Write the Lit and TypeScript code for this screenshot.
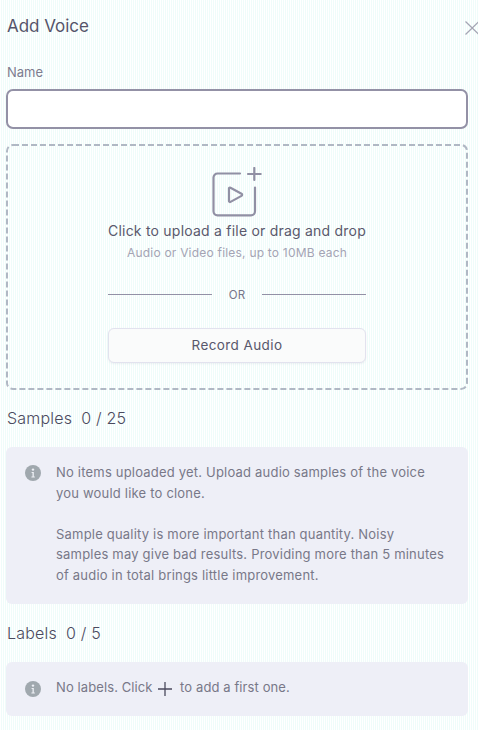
import { LitElement, html, css, svg } from "lit";
import { customElement } from "lit/decorators.js";

const info = svg`<svg class="info" viewBox="0 0 16 16" width="16" height="16"><circle cx="8" cy="8" r="8" fill="#a0a8ae"/><circle cx="8" cy="4.6" r="1.2" fill="#eef0f6"/><path d="M6.6 7h2.2v4.4h1v1H6.4v-1h1.1V8H6.6z" fill="#eef0f6"/></svg>`;

@customElement("app-root")
export class AppRoot extends LitElement {
  static styles = css`
    :host {
      display: block;
      width: 478px;
      height: 730px;
      overflow: hidden;
      box-sizing: border-box;
      padding: 0 10px 0 6px;
      font-family: Inter, "Liberation Sans", sans-serif;
      background: repeating-linear-gradient(90deg, #ffffff 0 1px, #effcfa 1px 2px);
      color: #4b4a5e;
    }
    .head { display: flex; justify-content: space-between; align-items: center; height: 52px; margin-right: -13px; }
    .title { font-size: 17px; line-height: 24px; padding-left: 1px; letter-spacing: -.03px; color: #55546a; }
    .close { display: block; margin-top: 3px; }
    .name { font-size: 13px; line-height: 18px; color: #7d7c8f; margin-top: 11px; padding-left: 1px; }
    .input { box-sizing: border-box; height: 40px; margin-top: 8px; background: #fff; border: 2px solid #9391a6; border-radius: 7px; }
    .drop { box-sizing: border-box; height: 246px; margin-top: 15px; border-radius: 6px; display: flex; flex-direction: column; align-items: center; position: relative; }
    .dash { position: absolute; inset: 0; width: 100%; height: 100%; }
    .dash rect { width: calc(100% - 2px); height: calc(100% - 2px); }
    .icon { display: block; margin-top: 23px; }
    .drop-title { font-size: 14px; line-height: 20px; margin-top: 4px; color: #5a596c; letter-spacing: .22px; }
    .drop-sub { font-size: 12px; line-height: 18px; color: #a4a4b4; margin-top: 3px; letter-spacing: .21px; }
    .or { width: 258px; display: flex; align-items: center; gap: 16.5px; font-size: 11.5px; color: #77768a; margin-top: 24.5px; line-height: 16px; letter-spacing: .2px; }
    .or i { flex: 1; height: 1px; background: #9391a6; }
    .btn { box-sizing: border-box; width: 258px; height: 35px; margin-top: 25.5px; padding-bottom: 2px; border: 1px solid #e2e2ee; border-radius: 6px; background: #fafbfb; box-shadow: 0 1px 2px rgba(80,80,120,.08); font-size: 13.5px; font-weight: 400; color: #58576b; display: flex; align-items: center; justify-content: center; letter-spacing: .4px; }
    .section { font-size: 16px; font-weight: 300; line-height: 22px; color: #4b4a5e; display: flex; gap: 9px; padding-left: 1px; letter-spacing: .2px; }
    .s1 { margin-top: 17px; }
    .s2 { margin-top: 18px; }
    .box { display: flex; gap: 15px; background: #eeeff7; border-radius: 6px; font-size: 13px; line-height: 20.6px; color: #787888; padding: 15px 20px 18px 19px; margin-top: 18px; letter-spacing: .2px; }
    .box p { margin: 0; }
    .box p + p { margin-top: 20.6px; }
    .info { flex: none; margin-top: 3px; }
    .box.l { margin-top: 18px; align-items: center; height: 54px; box-sizing: border-box; padding: 0 19px 2px; letter-spacing: .1px; }
    .box.l .info { margin-top: 2px; }
    .plus { display: inline-block; vertical-align: middle; margin: 0 4px 0 2px; }
  `;

  render() {
    return html`
      <div class="head">
        <div class="title">Add Voice</div>
        <svg class="close" width="16" height="14" viewBox="0 0 16 14"><path d="M.5.5 14 13.500M14 .5.5 13.500" stroke="#a5a6b4" stroke-width="1.300" fill="none"/></svg>
      </div>
      <div class="name">Name</div>
      <div class="input"></div>
      <div class="drop">
        <svg class="dash"><rect x="1" y="1" rx="6" fill="none" stroke="#b0b8c4" stroke-width="2" stroke-dasharray="6 3"/></svg>
        <svg class="icon" width="50" height="50" viewBox="0 0 50 50" fill="none" stroke="#9190a4" stroke-width="2.200" stroke-linecap="round" stroke-linejoin="round">
          <path d="M28 6.500H5.500a4 4 0 0 0-4 4V44.300a4 4 0 0 0 4 4H39a4 4 0 0 0 4-4V20.500"/>
          <path d="M17 21v13a1 1 0 0 0 1.500.9l11-6a1.200 1.200 0 0 0 0-2.100l-11-6a1 1 0 0 0-1.500.9z"/>
          <path d="M42.300 1v12M36 7h12.700"/>
        </svg>
        <div class="drop-title">Click to upload a file or drag and drop</div>
        <div class="drop-sub">Audio or Video files, up to 10MB each</div>
        <div class="or"><i></i><span>OR</span><i></i></div>
        <div class="btn">Record Audio</div>
      </div>
      <div class="section s1"><span>Samples</span><span>0 / 25</span></div>
      <div class="box">
        ${info}
        <div>
          <p>No items uploaded yet. Upload audio samples of the voice you would like to clone.</p>
          <p>Sample quality is more important than quantity. Noisy samples may give bad results. Providing more than 5 minutes of audio in total brings little improvement.</p>
        </div>
      </div>
      <div class="section s2"><span>Labels</span><span>0 / 5</span></div>
      <div class="box l">
        ${info}
        <div>No labels. Click <svg class="plus" width="14" height="14" viewBox="0 0 14 14"><path d="M7 0v14M0 7h14" stroke="#4b4a5e" stroke-width="1.300"/></svg> to add a first one.</div>
      </div>
    `;
  }
}
